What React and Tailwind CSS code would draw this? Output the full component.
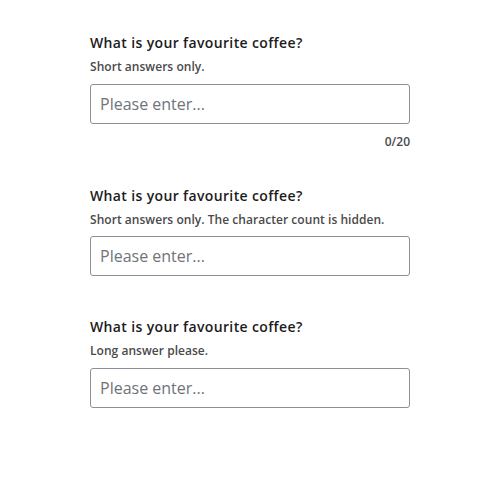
import { useState } from 'react';

const fields = [
  { id: 'coffee-1', label: 'What is your favourite coffee?', hint: 'Short answers only.', max: 20, showCount: true },
  { id: 'coffee-2', label: 'What is your favourite coffee?', hint: 'Short answers only. The character count is hidden.', max: 20, showCount: false },
  { id: 'coffee-3', label: 'What is your favourite coffee?', hint: 'Long answer please.', showCount: false },
];

function TextField({ id, label, hint, max, showCount }) {
  const [value, setValue] = useState('');
  return (
    <div className="flex flex-col">
      <label htmlFor={id} className="text-sm leading-5 font-semibold tracking-[0.36px] text-[#1c1c1c]">
        {label}
      </label>
      <p className="mt-[5px] text-xs leading-[18px] font-semibold tracking-[0.04px] text-[#4a4a4a]">{hint}</p>
      <input
        id={id}
        value={value}
        maxLength={max}
        onChange={(e) => setValue(e.target.value)}
        placeholder="Please enter..."
        className="mt-[7.5px] h-10 w-full rounded-[3px] border border-[#8a8f98] bg-white px-[9px] text-base text-[#1c1c1c] placeholder:text-[#6f7378] outline-none"
      />
      {showCount && (
        <div className="mt-[9px] text-right text-xs leading-[18px] font-semibold text-[#4a4a4a]">
          {value.length}/{max}
        </div>
      )}
    </div>
  );
}

export default function App() {
  return (
    <div className="min-h-[500px] bg-white font-['Open_Sans',sans-serif]">
      <div className="mx-auto flex w-[320px] flex-col pt-[33px]">
        <TextField {...fields[0]} />
        <div className="mt-[35px]">
          <TextField {...fields[1]} />
        </div>
        <div className="mt-[41px]">
          <TextField {...fields[2]} />
        </div>
      </div>
    </div>
  );
}
